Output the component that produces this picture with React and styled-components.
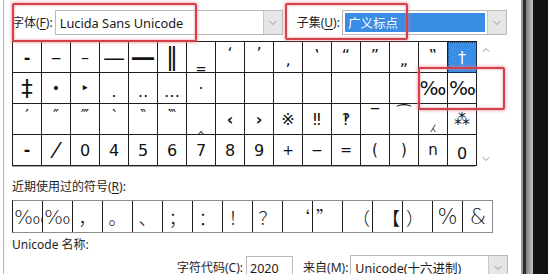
import styled, { createGlobalStyle, css } from "styled-components";
import { ChevronDown, ChevronUp } from "lucide-react";

const GlobalStyle = createGlobalStyle`
  html, body { margin: 0; padding: 0; background: #ffffff; }
  body { font-family: "Noto Sans", "Noto Sans CJK SC", sans-serif; color: #1a1a1a; }
`;

// s = font size, dy = vertical nudge, b = bold
const symbolRows = [
  [
    { c: "‑", b: true }, { c: "‒" }, { c: "–" }, { c: "—", s: 22 }, { c: "―", s: 22, b: true },
    { c: "‖", s: 24 }, { c: "‗", dy: 4 }, { c: "‘", dy: -4 }, { c: "’", dy: -4 }, { c: "‚", dy: 2 },
    { c: "‛", dy: -2 }, { c: "“", dy: -2 }, { c: "”", dy: -2 }, { c: "„", dy: 2 }, { c: "‟", dy: -2 },
    { c: "†", selected: true },
  ],
  [
    { c: "‡", s: 23 }, { c: "•", s: 14 }, { c: "‣", s: 14 }, { c: "․", dy: 3 }, { c: "‥", dy: 3 },
    { c: "…", dy: 3 }, { c: "‧" }, { c: "" }, { c: "" }, { c: "" }, { c: "" }, { c: "" }, { c: "" },
    { c: "" }, { c: "‰", s: 20 }, { c: "‱", s: 20, clip: true },
  ],
  [
    { c: "′", dy: -4 }, { c: "″", dy: -4 }, { c: "‴", dy: -4 }, { c: "‵", dy: -4 }, { c: "‶", dy: -4 },
    { c: "‷", dy: -4 }, { c: "‸", dy: 5 }, { c: "‹", b: true }, { c: "›", b: true }, { c: "※" }, { c: "‼" },
    { c: "‽" }, { c: "‾", dy: -5 }, { c: "⁀", dy: -6 }, { c: "⁁", dy: 3 }, { c: "⁂" },
  ],
  [
    { c: "⁃", b: true }, { c: "⁄", s: 22 }, { c: "0" }, { c: "4" }, { c: "5" }, { c: "6" }, { c: "7" },
    { c: "8" }, { c: "9" }, { c: "+", s: 14 }, { c: "−", s: 14 }, { c: "=", s: 14 }, { c: "(", s: 15 },
    { c: ")", s: 15 }, { c: "n", s: 15 }, { c: "0", dy: 3 },
  ],
];

const recentSymbols = [
  { c: "‱", s: 20, clip: true }, { c: "‰", s: 20 }, { c: "，", cjk: true }, { c: "。", cjk: true },
  { c: "、", cjk: true }, { c: "；", cjk: true }, { c: "：", cjk: true }, { c: "！", cjk: true },
  { c: "？", cjk: true }, { c: "‘", cjk: true, side: "end" }, { c: "”", cjk: true, side: "start" },
  { c: "（", cjk: true, side: "end" }, { c: "【", cjk: true, side: "end" }, { c: "）", cjk: true, side: "start" },
  { c: "%", s: 21 }, { c: "&", s: 21 },
];

export default function App() {
  return (
    <Screen>
      <GlobalStyle />
      <Dialog>
        <TopRow>
          <Label>字体(<u>F</u>):</Label>
          <Combo $width={228}>
            <Field $size={12.8}>Lucida Sans Unicode</Field>
            <DropButton><ChevronDown size={12} strokeWidth={1.4} /></DropButton>
          </Combo>
          <Label $gap={14}>子集(<u>U</u>):</Label>
          <Combo $width={165}>
            <Field $selected>广义标点</Field>
            <DropButton><ChevronDown size={12} strokeWidth={1.4} /></DropButton>
          </Combo>
        </TopRow>

        <GridArea>
          <SymbolGrid>
            {symbolRows.flat().map((cell, i) => (
              <Cell key={i} $size={cell.s} $dy={cell.dy} $bold={cell.b} $selected={cell.selected} $clip={cell.clip}>
                {cell.c}
              </Cell>
            ))}
          </SymbolGrid>
          <ScrollBar>
            <ChevronUp size={12} strokeWidth={1.4} />
            <ChevronDown size={12} strokeWidth={1.4} />
          </ScrollBar>
        </GridArea>

        <SectionLabel $top={13}>近期使用过的符号(<u>R</u>):</SectionLabel>
        <RecentRow>
          {recentSymbols.map((cell, i) => (
            <RecentCell key={i} $size={cell.s} $cjk={cell.cjk} $side={cell.side} $clip={cell.clip}>
              {cell.c}
            </RecentCell>
          ))}
        </RecentRow>

        <SectionLabel $top={4}>Unicode 名称:</SectionLabel>
        <CodeRow>
          <Label>字符代码(<u>C</u>):</Label>
          <CodeInput>2020</CodeInput>
          <Label $gap={10}>来自(<u>M</u>):</Label>
          <Combo $width={158}>
            <Field>Unicode(十六进制)</Field>
            <DropButton><ChevronDown size={12} strokeWidth={1.4} /></DropButton>
          </Combo>
        </CodeRow>
      </Dialog>
      <WindowEdge>
        <span />
        <span />
        <span />
        <span />
      </WindowEdge>

      <Highlight style={{ left: 12, top: 3, width: 185, height: 39 }} />
      <Highlight style={{ left: 285, top: 3, width: 123, height: 37 }} />
      <Highlight style={{ left: 418, top: 67, width: 87, height: 43 }} />
    </Screen>
  );
}

const Screen = styled.div`
  position: relative;
  width: 548px;
  height: 274px;
  overflow: hidden;
  display: flex;
  background: #ffffff;
`;

const Dialog = styled.div`
  width: 518px;
  margin-left: 3px;
  border-left: 1px solid #b4b4b4;
  padding: 10px 0 0 8px;
  box-sizing: border-box;
  background: #ffffff;
  font-size: 12px;
`;

const TopRow = styled.div`
  display: flex;
  align-items: center;
  height: 25px;
`;

const Label = styled.span`
  font-size: 12px;
  line-height: 16px;
  color: #1e1e1e;
  white-space: nowrap;
  margin-left: ${({ $gap }) => ($gap ? `${$gap}px` : "0")};
  margin-right: 2px;

  u {
    text-underline-offset: 2px;
  }
`;

const Combo = styled.div`
  width: ${({ $width }) => $width}px;
  height: 25px;
  box-sizing: border-box;
  border: 1px solid #b9b9b9;
  display: flex;
  background: #ffffff;
`;

const Field = styled.div`
  flex: 1;
  display: flex;
  align-items: center;
  margin: 2px;
  padding-left: ${({ $selected }) => ($selected ? "3px" : "2px")};
  font-size: ${({ $size }) => $size || 12.5}px;
  white-space: nowrap;
  overflow: hidden;
  color: ${({ $selected }) => ($selected ? "#ffffff" : "#1a1a1a")};
  background: ${({ $selected }) => ($selected ? "#3a8de4" : "transparent")};
`;

const DropButton = styled.div`
  width: 18px;
  display: flex;
  align-items: center;
  justify-content: center;
  background: #e6e6e6;
  border-left: 1px solid #c8c8c8;
  color: #707070;
`;

const GridArea = styled.div`
  display: flex;
  margin-top: 6px;
`;

const SymbolGrid = styled.div`
  display: grid;
  grid-template-columns: repeat(16, 29px);
  grid-template-rows: repeat(4, 31px);
  border-top: 1px solid #1e1e1e;
  border-left: 1px solid #1e1e1e;
  box-shadow: -1px 2px 0 -1px #a8a8a8;
  font-family: "DejaVu Sans", "Noto Sans CJK SC", sans-serif;
`;

const Cell = styled.div`
  display: flex;
  align-items: center;
  justify-content: center;
  border-right: 1px solid #1e1e1e;
  border-bottom: 1px solid #1e1e1e;
  font-size: ${({ $size }) => $size || 16}px;
  font-weight: ${({ $bold }) => ($bold ? 700 : 400)};
  color: #121212;
  overflow: hidden;
  white-space: nowrap;
  box-sizing: border-box;
  padding-top: ${({ $dy }) => ($dy > 0 ? $dy * 2 : 0)}px;
  padding-bottom: ${({ $dy }) => ($dy < 0 ? -$dy * 2 : 0)}px;
  ${({ $clip }) => $clip && css`justify-content: flex-start; padding-left: 1px;`}
  ${({ $selected }) =>
    $selected &&
    css`
      background: #3b8ee6;
      color: #ffffff;
      outline: 1px dotted #1a3f70;
      outline-offset: -1px;
    `}
`;

const ScrollBar = styled.div`
  width: 17px;
  display: flex;
  flex-direction: column;
  justify-content: space-between;
  align-items: center;
  padding: 3px 0 1px;
  color: #6a6a6a;
`;

const SectionLabel = styled.div`
  margin-top: ${({ $top }) => $top}px;
  font-size: 12px;
  line-height: 16px;
  color: #1e1e1e;

  u {
    text-underline-offset: 2px;
  }
`;

const RecentRow = styled.div`
  display: grid;
  grid-template-columns: repeat(16, 30px);
  width: 481px;
  box-sizing: border-box;
  height: 33px;
  margin-top: 5px;
  border: 1px solid #8c8c8c;
  border-left-color: #1e1e1e;
`;

const RecentCell = styled.div`
  display: flex;
  align-items: center;
  justify-content: ${({ $side }) => ($side === "end" ? "flex-end" : $side === "start" ? "flex-start" : "center")};
  padding: 0 ${({ $side }) => ($side === "end" ? "2px" : "0")} 0 ${({ $side }) => ($side === "start" ? "3px" : "0")};
  border-right: 1px solid #1e1e1e;
  overflow: hidden;
  white-space: nowrap;
  font-family: ${({ $cjk }) => ($cjk ? '"Noto Sans CJK SC", sans-serif' : '"DejaVu Sans", sans-serif')};
  font-size: ${({ $size }) => $size || 18}px;
  font-weight: 300;
  color: #161616;
  ${({ $clip }) => $clip && css`justify-content: flex-start; padding-left: 1px;`}

  &:last-child {
    border-right: none;
  }
`;

const CodeRow = styled.div`
  display: flex;
  align-items: center;
  margin-top: 2px;
  margin-left: 165px;
`;

const CodeInput = styled.div`
  width: 47px;
  height: 24px;
  box-sizing: border-box;
  border: 1px solid #b9b9b9;
  padding: 3px 3px 0;
  font-size: 12.5px;
  margin-left: 1px;
`;

const WindowEdge = styled.div`
  flex: 1;
  display: flex;

  span:nth-child(1) { width: 2px; background: #9a9a9a; }
  span:nth-child(2) { width: 3px; background: #2c2c2c; }
  span:nth-child(3) { width: 7px; background: linear-gradient(90deg, #7e7e7e, #c4c4c4); }
  span:nth-child(4) { flex: 1; background: #121212; }
`;

const Highlight = styled.div`
  position: absolute;
  box-sizing: border-box;
  border: 2px solid #d3414b;
  border-radius: 2px;
  box-shadow: 0 0 3px 1px rgba(232, 120, 130, 0.55), inset 0 0 2px 1px rgba(232, 120, 130, 0.4);
  pointer-events: none;
`;
